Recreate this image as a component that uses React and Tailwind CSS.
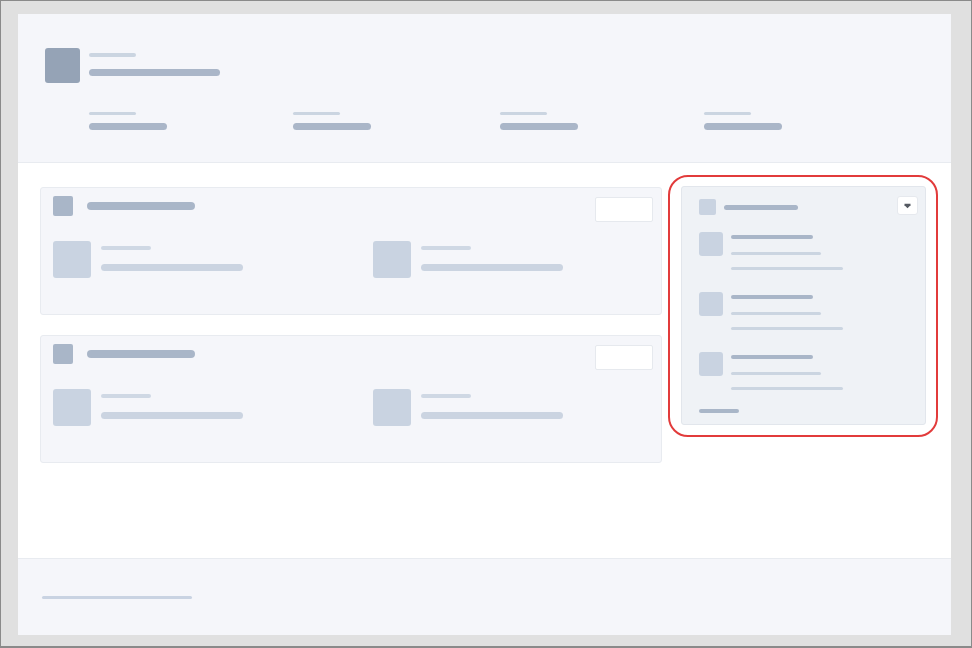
import React from "react";

const stats = [0, 1, 2, 3];
const cards = [0, 1];
const feed = [0, 1, 2];

function CardItem() {
  return (
    <div className="flex gap-[10px]">
      <div className="w-[38px] h-[37px] rounded-[3px] bg-[#c9d3e1]" />
      <div className="pt-[5px]">
        <div className="w-[50px] h-[4px] rounded-full bg-[#cfd8e4]" />
        <div className="mt-[14px] w-[142px] h-[7px] rounded-full bg-[#cbd4e1]" />
      </div>
    </div>
  );
}

function Card() {
  return (
    <div className="h-[128px] rounded-[3px] border border-[#e8ebf0] bg-[#f5f6fa] pl-[12px] pr-[8px] pt-[8px]">
      <div className="flex items-start justify-between">
        <div className="flex items-center gap-[14px]">
          <div className="w-[20px] h-[20px] rounded-[2px] bg-[#a9b6c8]" />
          <div className="w-[108px] h-[8px] rounded-full bg-[#a9b6c8]" />
        </div>
        <div className="mt-[1px] w-[58px] h-[25px] rounded-[2px] border border-[#e6e9ee] bg-white" />
      </div>
      <div className="mt-[19px] grid grid-cols-[320px_1fr]">
        <CardItem />
        <CardItem />
      </div>
    </div>
  );
}

function FeedItem() {
  return (
    <div className="flex gap-[8px] h-[39px]">
      <div className="w-[24px] h-[24px] rounded-[3px] bg-[#c9d3e1]" />
      <div className="pt-[3px]">
        <div className="w-[82px] h-[4px] rounded-full bg-[#a9b6c8]" />
        <div className="mt-[13px] w-[90px] h-[3px] rounded-full bg-[#cbd5e1]" />
        <div className="mt-[12px] w-[112px] h-[3px] rounded-full bg-[#cbd5e1]" />
      </div>
    </div>
  );
}

export default function App() {
  return (
    <div className="w-[972px] h-[648px] bg-[#e0e0e0] border border-b-2 border-[#8a8a8a] pl-[17px] pt-[13px] overflow-hidden">
      <div className="w-[933px] h-[621px] bg-white flex flex-col">
        {/* header */}
        <header className="h-[149px] shrink-0 border-b border-[#e8ebf0] bg-[#f5f6fa] pl-[27px] pt-[34px]">
          <div className="flex items-start gap-[9px]">
            <div className="w-[35px] h-[35px] rounded-[3px] bg-[#95a3b6]" />
            <div className="pt-[5px]">
              <div className="w-[47px] h-[4px] rounded-full bg-[#cbd5e1]" />
              <div className="mt-[12px] w-[131px] h-[7px] rounded-full bg-[#aab6c8]" />
            </div>
          </div>
          <div className="ml-[44px] mt-[29px] grid grid-cols-[204px_207px_204px_204px]">
            {stats.map((s) => (
              <div key={s}>
                <div className="w-[47px] h-[3px] rounded-full bg-[#cbd5e1]" />
                <div className="mt-[8px] w-[78px] h-[7px] rounded-full bg-[#aab6c8]" />
              </div>
            ))}
          </div>
        </header>

        {/* main */}
        <main className="h-[395px] shrink-0 flex gap-[6px] pl-[22px] pt-[12px]">
          <div className="mt-[12px] w-[622px] flex flex-col gap-[20px]">
            {cards.map((c) => (
              <Card key={c} />
            ))}
          </div>

          <div className="w-[270px] h-[262px] rounded-[20px] border-2 border-[#e23b3b] pl-[11px] pr-[10px] pt-[9px] pb-[10px]">
            <div className="h-full rounded-[3px] border border-[#e2e6ec] bg-[#eff2f6] pl-[17px] pr-[7px] pt-[9px]">
              <div className="flex items-start justify-between">
                <div className="mt-[3px] flex items-center gap-[8px]">
                  <div className="w-[17px] h-[16px] rounded-[2px] bg-[#c9d3e1]" />
                  <div className="w-[74px] h-[5px] rounded-full bg-[#a9b6c8]" />
                </div>
                <div className="w-[21px] h-[19px] rounded-[3px] border border-[#e6e9ee] bg-white flex items-center justify-center">
                  <svg width="7" height="6" viewBox="0 0 7 6">
                    <path d="M0.5 0.8 H6.5 V2.2 L3.5 5.2 L0.5 2.2 Z" fill="#555a62" />
                  </svg>
                </div>
              </div>
              <div className="mt-[17px] flex flex-col gap-[21px]">
                {feed.map((f) => (
                  <FeedItem key={f} />
                ))}
              </div>
              <div className="mt-[18px] w-[40px] h-[4px] rounded-full bg-[#a9b6c8]" />
            </div>
          </div>
        </main>

        {/* footer */}
        <footer className="flex-1 border-t border-[#e8ebf0] bg-[#f5f6fa] pl-[24px] pt-[37px]">
          <div className="w-[150px] h-[3px] rounded-full bg-[#c9d3e2]" />
        </footer>
      </div>
    </div>
  );
}
